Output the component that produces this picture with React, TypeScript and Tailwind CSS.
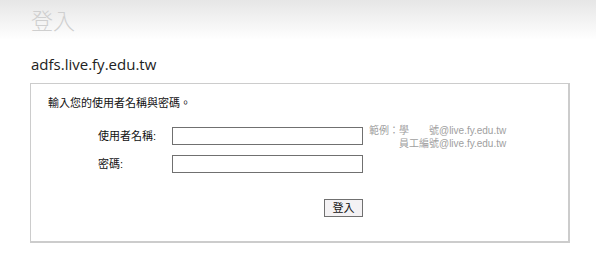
import React from 'react'

const cjk = { fontFamily: '"Liberation Sans", "Noto Sans CJK TC", sans-serif' }

export default function App() {
  return (
    <div className="w-[596px] h-[265px] bg-white overflow-hidden relative">
      {/* header */}
      <div className="h-[40px] bg-gradient-to-b from-[#e6e6e6] to-white pl-[31px] pt-[5px]">
        <div className="text-[22px] leading-[28px] text-[#cfcfcf]" style={{ fontFamily: '"Noto Sans CJK TC", sans-serif', fontWeight: 300 }}>
          登入
        </div>
      </div>

      <div
        className="ml-[31px] mt-[13px] text-[15px] leading-[22px] text-[#222]"
        style={{ fontFamily: '"Open Sans", "Noto Sans", sans-serif' }}
      >
        adfs.live.fy.edu.tw
      </div>

      {/* panel */}
      <div className="ml-[30px] mt-[8px] w-[540px] h-[160px] border border-[#cccccc] border-r-2 border-b-2" style={cjk}>
        <div className="pl-[17px] pt-[11px] text-[11px] leading-[16px] text-[#111]">輸入您的使用者名稱與密碼。</div>

        <div className="mt-[16px] pl-[67px] flex flex-col gap-[10px]">
          <div className="flex items-start h-[18px]">
            <div className="w-[74px] text-[11px] leading-[18px] text-[#111]">使用者名稱:</div>
            <div className="w-[191px] h-[18px] border border-[#707070] bg-white" />
            <div className="ml-[6px] -mt-[3px] text-[10px] leading-[13px] text-[#a0a0a0] whitespace-nowrap">
              <div>範例：學　　號@live.fy.edu.tw</div>
              <div className="pl-[30px]">員工編號@live.fy.edu.tw</div>
            </div>
          </div>
          <div className="flex items-start h-[18px]">
            <div className="w-[74px] text-[11px] leading-[18px] text-[#111]">密碼:</div>
            <div className="w-[191px] h-[18px] border border-[#707070] bg-white" />
          </div>
        </div>

        <div className="mt-[26px] pl-[293px] flex">
          <button className="w-[39px] h-[18px] border border-[#707070] bg-[#f4f2f4] text-[11px] leading-[16px] text-[#111] flex items-center justify-center">
            登入
          </button>
        </div>
      </div>
    </div>
  )
}
